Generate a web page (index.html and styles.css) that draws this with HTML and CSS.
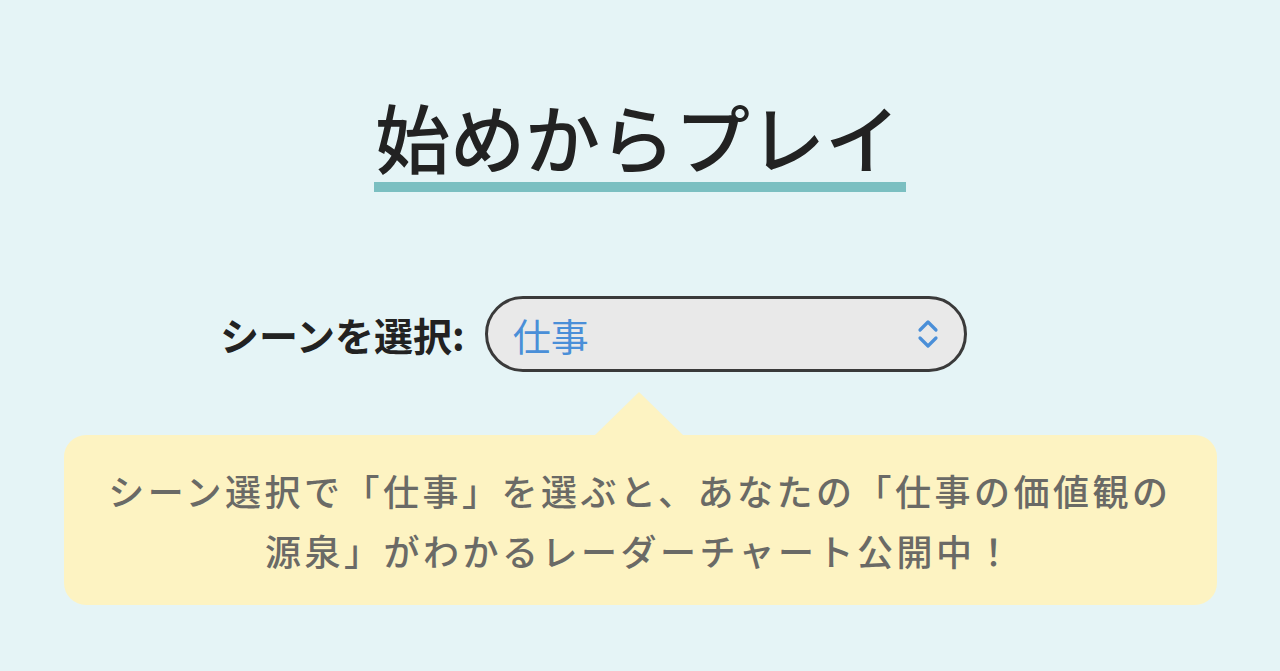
FILE: index.html
```html
<!DOCTYPE html>
<html lang="ja">
<head>
    <meta charset="UTF-8">
    <meta name="viewport" content="width=device-width, initial-scale=1.0">
    <title>始めからプレイ</title>
    <link rel="stylesheet" href="styles.css">
</head>
<body>
    <div id="container">
        <h1 class="title">始めからプレイ</h1>

        <div class="scene-row">
            <span class="scene-label">シーンを選択:</span>
            <div class="scene-select">
                <span class="scene-value">仕事</span>
                <svg class="scene-arrows" width="24" height="34" viewBox="0 0 24 34">
                    <path d="M4 13 L12 5 L20 13" fill="none" stroke="#4a8fd8" stroke-width="3.2" stroke-linecap="round" stroke-linejoin="round"/>
                    <path d="M4 21 L12 29 L20 21" fill="none" stroke="#4a8fd8" stroke-width="3.2" stroke-linecap="round" stroke-linejoin="round"/>
                </svg>
            </div>
        </div>

        <div class="bubble">
            <p class="bubble-text">シーン選択で「仕事」を選ぶと、あなたの「仕事の価値観の<br>源泉」がわかるレーダーチャート公開中！</p>
        </div>
    </div>
</body>
</html>
```

FILE: styles.css
```css
body {
    margin: 0;
    background-color: #e5f4f6;
    font-family: 'Noto Sans CJK JP', 'Noto Sans', sans-serif;
    height: 671px;
    overflow: hidden;
}

#container {
    display: flex;
    flex-direction: column;
    align-items: center;
    padding-top: 91px;
}

.title {
    display: inline-block;
    margin: 0;
    padding: 0 6px 2px 1px;
    font-size: 75px;
    font-weight: 500;
    line-height: 89px;
    color: #222;
    border-bottom: 10px solid #7bbfc1;
}

.scene-row {
    display: flex;
    align-items: center;
    gap: 20px;
    margin-top: 104px;
    align-self: flex-start;
    margin-left: 220px;
}

.scene-label {
    font-size: 39px;
    font-weight: 700;
    letter-spacing: 0;
    color: #222;
}

.scene-select {
    display: flex;
    align-items: center;
    justify-content: space-between;
    box-sizing: border-box;
    width: 482px;
    height: 76px;
    padding: 0 24px 0 25px;
    background-color: #e9e9e9;
    border: 3px solid #3a3a3a;
    border-radius: 38px;
}

.scene-value {
    font-size: 38px;
    color: #4a8fd8;
}

.bubble {
    position: relative;
    box-sizing: border-box;
    width: 1153px;
    margin-top: 63px;
    padding: 25px 20px 25px;
    background-color: #fdf3c2;
    border-radius: 22px;
    text-align: center;
}

.bubble::before {
    content: "";
    position: absolute;
    left: 530px;
    top: -43px;
    border-left: 45px solid transparent;
    border-right: 45px solid transparent;
    border-bottom: 44px solid #fdf3c2;
}

.bubble-text {
    margin: 0;
    font-size: 36px;
    font-weight: 500;
    line-height: 60px;
    letter-spacing: 3.5px;
    color: #6a6a66;
}
```
